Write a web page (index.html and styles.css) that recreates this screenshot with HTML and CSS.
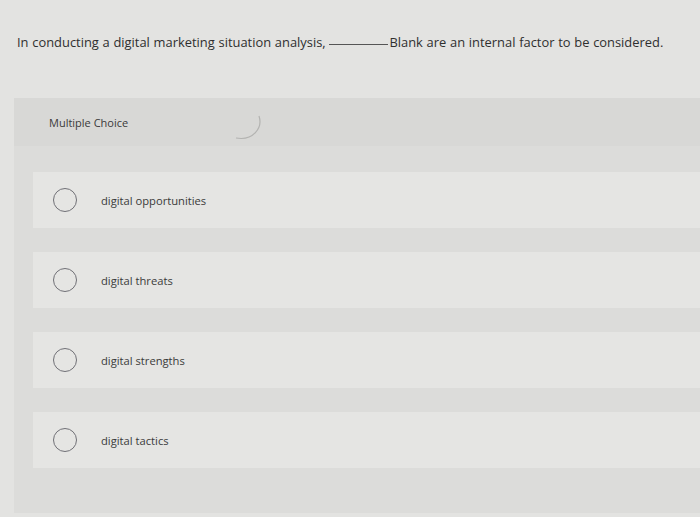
FILE: index.html
```html
<!DOCTYPE html>
<html lang="en">
<head>
<meta charset="utf-8">
<title>Multiple Choice</title>
<link rel="stylesheet" href="styles.css">
</head>
<body>
<div class="page">
  <p class="question">In conducting a digital marketing situation analysis, <span class="blank"></span>Blank are an internal factor to be considered.</p>
  <section class="panel">
    <header class="panel-header">
      <span class="label">Multiple Choice</span>
      <svg class="arc" width="32" height="28" viewBox="0 0 32 28"><path d="M27 2 C31 14 21 27 4 24" fill="none" stroke="#b3b3b1" stroke-width="1.2"/></svg>
    </header>
    <div class="options">
      <div class="option"><span class="radio"></span><span class="text">digital opportunities</span></div>
      <div class="option"><span class="radio"></span><span class="text">digital threats</span></div>
      <div class="option"><span class="radio"></span><span class="text">digital strengths</span></div>
      <div class="option"><span class="radio"></span><span class="text">digital tactics</span></div>
    </div>
  </section>
</div>
</body>
</html>
```
FILE: styles.css
```css
html, body {
  margin: 0;
  padding: 0;
}
body {
  background: #e3e3e1;
  font-family: "Open Sans", "Liberation Sans", sans-serif;
  color: #3b3b3b;
}
.page {
  width: 700px;
  height: 517px;
  overflow: hidden;
  background: #e3e3e1;
  display: flex;
  flex-direction: column;
}
.question {
  margin: 0;
  padding: 33px 0 0 17px;
  height: 98px;
  box-sizing: border-box;
  font-size: 12.9px;
  word-spacing: 0.4px;
  color: #2f2f2f;
  white-space: nowrap;
}
.blank {
  display: inline-block;
  width: 59px;
  border-bottom: 1px solid #555;
  vertical-align: 2px;
  margin-right: 1px;
}
.panel {
  margin-left: 14px;
  height: 415px;
  flex: none;
  background: #dcdcda;
  display: flex;
  flex-direction: column;
}
.panel-header {
  height: 48px;
  flex: none;
  display: flex;
  align-items: center;
  padding-left: 35px;
  background: #d8d8d6;
  gap: 104px;
}
.label {
  font-size: 11px;
  color: #3a3a3a;
}
.arc {
  margin-top: 12px;
}
.options {
  display: flex;
  flex-direction: column;
  gap: 24px;
  padding: 26px 0 0 19px;
}
.option {
  height: 56px;
  background: #e5e5e3;
  display: flex;
  align-items: center;
  padding-left: 20px;
  gap: 24px;
}
.radio {
  width: 24px;
  height: 24px;
  border: 1.4px solid #707076;
  border-radius: 50%;
  box-sizing: border-box;
  flex: none;
}
.text {
  font-size: 11.2px;
  color: #3a3a3a;
}
```
